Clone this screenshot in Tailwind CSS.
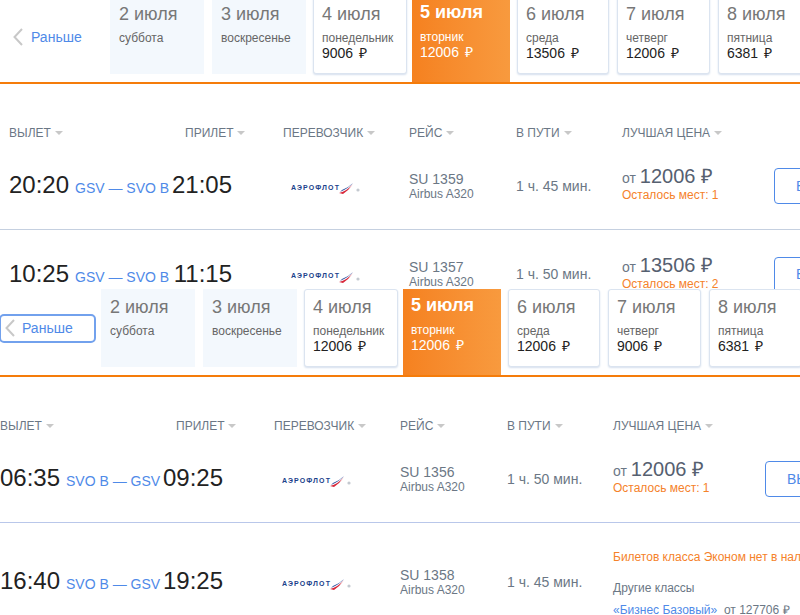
<!doctype html>
<html lang="ru">
<head>
    <meta charset="UTF-8">
    <meta name="viewport" content="width=device-width, initial-scale=1.0">
    <title>Рейсы</title>
    <script src="https://cdn.jsdelivr.net/npm/@tailwindcss/browser@4"></script>
</head>
<body class="bg-white overflow-hidden h-[615px] w-[800px] font-['Liberation_Sans',Arial,sans-serif]">

<!-- First view -->
<section class="h-[289px] overflow-hidden">
    <!-- Date strip -->
    <div class="flex h-[88px] -mt-[4px] border-b-2 border-[#f57c0a]">
        <a class="w-[110px] h-[82px] shrink-0 flex items-center pl-[13px] gap-[8px] text-[14px] text-[#4f8ae8]">
            <svg width="10" height="18" viewBox="0 0 10 18" fill="none" stroke="#c8c8c8" stroke-width="2"><path d="M9 1 L1.5 9 L9 17"/></svg>
            <span>Раньше</span>
        </a>
        <div class="w-[94px] h-[78px] shrink-0 bg-[#f3f8fd] pl-[9px] pt-[7px] mr-[8px]">
            <p class="text-[18px] leading-[22px] text-[#777]">2 июля</p>
            <p class="text-[12px] leading-[15px] mt-[6px] text-[#666]">суббота</p>
        </div>
        <div class="w-[94px] h-[78px] shrink-0 bg-[#f3f8fd] pl-[9px] pt-[7px] mr-[7px]">
            <p class="text-[18px] leading-[22px] text-[#777]">3 июля</p>
            <p class="text-[12px] leading-[15px] mt-[6px] text-[#666]">воскресенье</p>
        </div>
        <div class="w-[94px] h-[78px] shrink-0 bg-white border border-[#dbe4f0] rounded-[3px] shadow-[0_1px_2px_#d5dfee] pl-[8px] pt-[6px] mr-[5px]">
            <p class="text-[18px] leading-[22px] text-[#777]">4 июля</p>
            <p class="text-[12px] leading-[15px] mt-[6px] text-[#666]">понедельник</p>
            <p class="text-[14px] leading-[15px] [word-spacing:2px] text-[#222]">9006 ₽</p>
        </div>
        <div class="w-[98px] h-[86px] shrink-0 bg-gradient-to-r from-[#f5811f] to-[#f89a3e] pl-[8px] pt-[5px] mr-[7px] text-white">
            <p class="text-[18px] leading-[22px] font-bold">5 июля</p>
            <p class="text-[12px] leading-[15px] mt-[7px]">вторник</p>
            <p class="text-[14px] leading-[15px] [word-spacing:2px]">12006 ₽</p>
        </div>
        <div class="w-[92px] h-[78px] shrink-0 bg-white border border-[#dbe4f0] rounded-[3px] shadow-[0_1px_2px_#d5dfee] pl-[8px] pt-[6px] mr-[8px]">
            <p class="text-[18px] leading-[22px] text-[#777]">6 июля</p>
            <p class="text-[12px] leading-[15px] mt-[6px] text-[#666]">среда</p>
            <p class="text-[14px] leading-[15px] [word-spacing:2px] text-[#222]">13506 ₽</p>
        </div>
        <div class="w-[93px] h-[78px] shrink-0 bg-white border border-[#dbe4f0] rounded-[3px] shadow-[0_1px_2px_#d5dfee] pl-[8px] pt-[6px] mr-[8px]">
            <p class="text-[18px] leading-[22px] text-[#777]">7 июля</p>
            <p class="text-[12px] leading-[15px] mt-[6px] text-[#666]">четверг</p>
            <p class="text-[14px] leading-[15px] [word-spacing:2px] text-[#222]">12006 ₽</p>
        </div>
        <div class="w-[93px] h-[78px] shrink-0 bg-white border border-[#dbe4f0] rounded-[3px] shadow-[0_1px_2px_#d5dfee] pl-[8px] pt-[6px]">
            <p class="text-[18px] leading-[22px] text-[#777]">8 июля</p>
            <p class="text-[12px] leading-[15px] mt-[6px] text-[#666]">пятница</p>
            <p class="text-[14px] leading-[15px] [word-spacing:2px] text-[#222]">6381 ₽</p>
        </div>
    </div>

    <!-- Table head -->
    <div class="grid grid-cols-[176px_98px_126px_107px_106px_1fr] pl-[9px] pt-[41px] h-[57px] text-[12px] leading-[16px] text-[#6b7785]">
        <div class="flex items-center gap-[4px]">ВЫЛЕТ <i class="w-0 h-0 border-x-[4px] border-x-transparent border-t-[4px] border-t-[#c8c8c8]"></i></div>
        <div class="flex items-center gap-[4px]">ПРИЛЕТ <i class="w-0 h-0 border-x-[4px] border-x-transparent border-t-[4px] border-t-[#c8c8c8]"></i></div>
        <div class="flex items-center gap-[4px]">ПЕРЕВОЗЧИК <i class="w-0 h-0 border-x-[4px] border-x-transparent border-t-[4px] border-t-[#c8c8c8]"></i></div>
        <div class="flex items-center gap-[4px]">РЕЙС <i class="w-0 h-0 border-x-[4px] border-x-transparent border-t-[4px] border-t-[#c8c8c8]"></i></div>
        <div class="flex items-center gap-[4px]">В ПУТИ <i class="w-0 h-0 border-x-[4px] border-x-transparent border-t-[4px] border-t-[#c8c8c8]"></i></div>
        <div class="flex items-center gap-[4px]">ЛУЧШАЯ ЦЕНА <i class="w-0 h-0 border-x-[4px] border-x-transparent border-t-[4px] border-t-[#c8c8c8]"></i></div>
    </div>

    <!-- Flights -->
    <div class="grid grid-cols-[274px_126px_107px_106px_1fr] items-center pl-[9px] h-[89px] border-b border-[#c5d0e0]">
        <div class="flex items-baseline w-[223px]">
            <span class="w-[59px] text-right text-[24px] text-[#222]">20:20</span>
            <span class="ml-[7px] text-[14px] whitespace-nowrap text-[#4f8ae8]">GSV — SVO B</span>
            <span class="ml-auto text-[24px] text-[#222]">21:05</span>
        </div>
        <div class="flex items-center pl-[8px] pt-[6px]">
            <span class="text-[7px] font-bold tracking-[1.1px] whitespace-nowrap text-[#1c3f8c]">АЭРОФЛОТ</span>
            <svg class="-ml-[2px]" width="24" height="12" viewBox="0 0 24 12"><path d="M1 11 Q9 9 15 2 Q11 8 5 12Z" fill="#d8273a"/><path d="M4 8 Q10 6 15 1 Q11 6 2 10Z" fill="#2b4f9e"/><circle cx="20" cy="8" r="1.6" fill="#c4c9d0"/></svg>
        </div>
        <div class="pt-[2px] text-[#6b7785]">
            <p class="text-[14px] leading-[15px]">SU 1359</p>
            <p class="text-[12px] leading-[14px]">Airbus A320</p>
        </div>
        <div class="pt-[2px] text-[14px] text-[#6b7785]">1 ч. 45 мин.</div>
        <div class="flex items-center">
            <div class="w-[152px] shrink-0">
                <p class="leading-[19px] text-[14px] text-[#6b7785] whitespace-nowrap">от <span class="text-[20px] text-[#566070]">12006 ₽</span></p>
                <p class="text-[12px] leading-[15px] text-[#f5822a]">Осталось мест: 1</p>
            </div>
            <button class="shrink-0 mt-[2px] w-[120px] h-[36px] border border-[#4f8ae8] rounded-[4px] text-[14px] text-left pl-[21px] text-[#4f8ae8]">ВЫБРАТЬ</button>
        </div>
    </div>
    <div class="grid grid-cols-[274px_126px_107px_106px_1fr] items-center pl-[9px] h-[87px]">
        <div class="flex items-baseline w-[223px]">
            <span class="w-[59px] text-right text-[24px] text-[#222]">10:25</span>
            <span class="ml-[7px] text-[14px] whitespace-nowrap text-[#4f8ae8]">GSV — SVO B</span>
            <span class="ml-auto text-[24px] text-[#222]">11:15</span>
        </div>
        <div class="flex items-center pl-[8px] pt-[6px]">
            <span class="text-[7px] font-bold tracking-[1.1px] whitespace-nowrap text-[#1c3f8c]">АЭРОФЛОТ</span>
            <svg class="-ml-[2px]" width="24" height="12" viewBox="0 0 24 12"><path d="M1 11 Q9 9 15 2 Q11 8 5 12Z" fill="#d8273a"/><path d="M4 8 Q10 6 15 1 Q11 6 2 10Z" fill="#2b4f9e"/><circle cx="20" cy="8" r="1.6" fill="#c4c9d0"/></svg>
        </div>
        <div class="pt-[2px] text-[#6b7785]">
            <p class="text-[14px] leading-[15px]">SU 1357</p>
            <p class="text-[12px] leading-[14px]">Airbus A320</p>
        </div>
        <div class="pt-[2px] text-[14px] text-[#6b7785]">1 ч. 50 мин.</div>
        <div class="flex items-center">
            <div class="w-[152px] shrink-0">
                <p class="leading-[19px] text-[14px] text-[#6b7785] whitespace-nowrap">от <span class="text-[20px] text-[#566070]">13506 ₽</span></p>
                <p class="text-[12px] leading-[15px] text-[#f5822a]">Осталось мест: 2</p>
            </div>
            <button class="shrink-0 mt-[2px] w-[120px] h-[36px] border border-[#4f8ae8] rounded-[4px] text-[14px] text-left pl-[21px] text-[#4f8ae8]">ВЫБРАТЬ</button>
        </div>
    </div>
</section>

<!-- Second view, scrolled 9px to the right -->
<section class="h-[326px] overflow-hidden -ml-[9px] w-[809px]">
    <!-- Date strip -->
    <div class="flex h-[88px] border-b-2 border-[#f57c0a]">
        <div class="w-[110px] h-[78px] flex items-center shrink-0">
            <a class="ml-[8px] w-[97px] h-[29px] flex items-center pl-[4px] gap-[7px] text-[14px] text-[#4f8ae8] border-2 border-[#4f8ae8]/80 rounded-[5px]">
                <svg width="10" height="18" viewBox="0 0 10 18" fill="none" stroke="#c8c8c8" stroke-width="2"><path d="M9 1 L1.5 9 L9 17"/></svg>
                <span>Раньше</span>
            </a>
        </div>
        <div class="w-[94px] h-[78px] shrink-0 bg-[#f3f8fd] pl-[9px] pt-[7px] mr-[8px]">
            <p class="text-[18px] leading-[22px] text-[#777]">2 июля</p>
            <p class="text-[12px] leading-[15px] mt-[6px] text-[#666]">суббота</p>
        </div>
        <div class="w-[94px] h-[78px] shrink-0 bg-[#f3f8fd] pl-[9px] pt-[7px] mr-[7px]">
            <p class="text-[18px] leading-[22px] text-[#777]">3 июля</p>
            <p class="text-[12px] leading-[15px] mt-[6px] text-[#666]">воскресенье</p>
        </div>
        <div class="w-[94px] h-[78px] shrink-0 bg-white border border-[#dbe4f0] rounded-[3px] shadow-[0_1px_2px_#d5dfee] pl-[8px] pt-[6px] mr-[5px]">
            <p class="text-[18px] leading-[22px] text-[#777]">4 июля</p>
            <p class="text-[12px] leading-[15px] mt-[6px] text-[#666]">понедельник</p>
            <p class="text-[14px] leading-[15px] [word-spacing:2px] text-[#222]">12006 ₽</p>
        </div>
        <div class="w-[98px] h-[86px] shrink-0 bg-gradient-to-r from-[#f5811f] to-[#f89a3e] pl-[8px] pt-[5px] mr-[7px] text-white">
            <p class="text-[18px] leading-[22px] font-bold">5 июля</p>
            <p class="text-[12px] leading-[15px] mt-[7px]">вторник</p>
            <p class="text-[14px] leading-[15px] [word-spacing:2px]">12006 ₽</p>
        </div>
        <div class="w-[92px] h-[78px] shrink-0 bg-white border border-[#dbe4f0] rounded-[3px] shadow-[0_1px_2px_#d5dfee] pl-[8px] pt-[6px] mr-[8px]">
            <p class="text-[18px] leading-[22px] text-[#777]">6 июля</p>
            <p class="text-[12px] leading-[15px] mt-[6px] text-[#666]">среда</p>
            <p class="text-[14px] leading-[15px] [word-spacing:2px] text-[#222]">12006 ₽</p>
        </div>
        <div class="w-[93px] h-[78px] shrink-0 bg-white border border-[#dbe4f0] rounded-[3px] shadow-[0_1px_2px_#d5dfee] pl-[8px] pt-[6px] mr-[8px]">
            <p class="text-[18px] leading-[22px] text-[#777]">7 июля</p>
            <p class="text-[12px] leading-[15px] mt-[6px] text-[#666]">четверг</p>
            <p class="text-[14px] leading-[15px] [word-spacing:2px] text-[#222]">9006 ₽</p>
        </div>
        <div class="w-[93px] h-[78px] shrink-0 bg-white border border-[#dbe4f0] rounded-[3px] shadow-[0_1px_2px_#d5dfee] pl-[8px] pt-[6px]">
            <p class="text-[18px] leading-[22px] text-[#777]">8 июля</p>
            <p class="text-[12px] leading-[15px] mt-[6px] text-[#666]">пятница</p>
            <p class="text-[14px] leading-[15px] [word-spacing:2px] text-[#222]">6381 ₽</p>
        </div>
    </div>

    <!-- Table head -->
    <div class="grid grid-cols-[176px_98px_126px_107px_106px_1fr] pl-[9px] pt-[41px] h-[57px] text-[12px] leading-[16px] text-[#6b7785]">
        <div class="flex items-center gap-[4px]">ВЫЛЕТ <i class="w-0 h-0 border-x-[4px] border-x-transparent border-t-[4px] border-t-[#c8c8c8]"></i></div>
        <div class="flex items-center gap-[4px]">ПРИЛЕТ <i class="w-0 h-0 border-x-[4px] border-x-transparent border-t-[4px] border-t-[#c8c8c8]"></i></div>
        <div class="flex items-center gap-[4px]">ПЕРЕВОЗЧИК <i class="w-0 h-0 border-x-[4px] border-x-transparent border-t-[4px] border-t-[#c8c8c8]"></i></div>
        <div class="flex items-center gap-[4px]">РЕЙС <i class="w-0 h-0 border-x-[4px] border-x-transparent border-t-[4px] border-t-[#c8c8c8]"></i></div>
        <div class="flex items-center gap-[4px]">В ПУТИ <i class="w-0 h-0 border-x-[4px] border-x-transparent border-t-[4px] border-t-[#c8c8c8]"></i></div>
        <div class="flex items-center gap-[4px]">ЛУЧШАЯ ЦЕНА <i class="w-0 h-0 border-x-[4px] border-x-transparent border-t-[4px] border-t-[#c8c8c8]"></i></div>
    </div>

    <!-- Flights -->
    <div class="grid grid-cols-[274px_126px_107px_106px_1fr] items-center pl-[9px] h-[89px] border-b border-[#b9c7ea]">
        <div class="flex items-baseline w-[223px]">
            <span class="w-[59px] text-right text-[24px] text-[#222]">06:35</span>
            <span class="ml-[7px] text-[14px] whitespace-nowrap text-[#4f8ae8]">SVO B — GSV</span>
            <span class="ml-auto text-[24px] text-[#222]">09:25</span>
        </div>
        <div class="flex items-center pl-[8px] pt-[6px]">
            <span class="text-[7px] font-bold tracking-[1.1px] whitespace-nowrap text-[#1c3f8c]">АЭРОФЛОТ</span>
            <svg class="-ml-[2px]" width="24" height="12" viewBox="0 0 24 12"><path d="M1 11 Q9 9 15 2 Q11 8 5 12Z" fill="#d8273a"/><path d="M4 8 Q10 6 15 1 Q11 6 2 10Z" fill="#2b4f9e"/><circle cx="20" cy="8" r="1.6" fill="#c4c9d0"/></svg>
        </div>
        <div class="pt-[2px] text-[#6b7785]">
            <p class="text-[14px] leading-[15px]">SU 1356</p>
            <p class="text-[12px] leading-[14px]">Airbus A320</p>
        </div>
        <div class="pt-[2px] text-[14px] text-[#6b7785]">1 ч. 50 мин.</div>
        <div class="flex items-center">
            <div class="w-[152px] shrink-0">
                <p class="leading-[19px] text-[14px] text-[#6b7785] whitespace-nowrap">от <span class="text-[20px] text-[#566070]">12006 ₽</span></p>
                <p class="text-[12px] leading-[15px] text-[#f5822a]">Осталось мест: 1</p>
            </div>
            <button class="shrink-0 mt-[2px] w-[120px] h-[36px] border border-[#4f8ae8] rounded-[4px] text-[14px] text-left pl-[21px] text-[#4f8ae8]">ВЫБРАТЬ</button>
        </div>
    </div>
    <div class="grid grid-cols-[274px_126px_107px_106px_1fr] items-center pl-[9px] h-[116px]">
        <div class="flex items-baseline w-[223px]">
            <span class="w-[59px] text-right text-[24px] text-[#222]">16:40</span>
            <span class="ml-[7px] text-[14px] whitespace-nowrap text-[#4f8ae8]">SVO B — GSV</span>
            <span class="ml-auto text-[24px] text-[#222]">19:25</span>
        </div>
        <div class="flex items-center pl-[8px] pt-[6px]">
            <span class="text-[7px] font-bold tracking-[1.1px] whitespace-nowrap text-[#1c3f8c]">АЭРОФЛОТ</span>
            <svg class="-ml-[2px]" width="24" height="12" viewBox="0 0 24 12"><path d="M1 11 Q9 9 15 2 Q11 8 5 12Z" fill="#d8273a"/><path d="M4 8 Q10 6 15 1 Q11 6 2 10Z" fill="#2b4f9e"/><circle cx="20" cy="8" r="1.6" fill="#c4c9d0"/></svg>
        </div>
        <div class="pt-[2px] text-[#6b7785]">
            <p class="text-[14px] leading-[15px]">SU 1358</p>
            <p class="text-[12px] leading-[14px]">Airbus A320</p>
        </div>
        <div class="pt-[2px] text-[14px] text-[#6b7785]">1 ч. 45 мин.</div>
        <div class="self-start pt-[27px] text-[12px] whitespace-nowrap">
            <p class="leading-[15px] text-[#f5822a]">Билетов класса Эконом нет в наличии</p>
            <p class="leading-[15px] mt-[16px] text-[#6b7785]">Другие классы</p>
            <p class="leading-[15px] mt-[7px] text-[#6b7785]"><span class="text-[#4f8ae8]">«Бизнес Базовый»</span>&nbsp; от 127706 ₽</p>
        </div>
    </div>
</section>

</body>
</html>
